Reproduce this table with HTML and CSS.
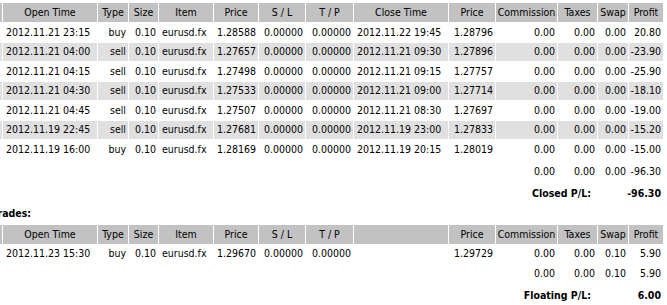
FILE: index.html
```html
<!DOCTYPE html>
<html>
<head>
<meta charset="utf-8">
<link rel="stylesheet" href="styles.css">
</head>
<body>
<div class="page">
<table class="stmt">
  <colgroup>
    <col class="c-ticket"><col class="c-otime"><col class="c-type"><col class="c-size"><col class="c-item"><col class="c-price"><col class="c-sl"><col class="c-tp"><col class="c-ctime"><col class="c-price2"><col class="c-comm"><col class="c-tax"><col class="c-swap"><col class="c-profit">
  </colgroup>
  <tr class="head">
    <td></td><td>Open Time</td><td>Type</td><td>Size</td><td>Item</td><td>Price</td><td>S / L</td><td>T / P</td><td>Close Time</td><td>Price</td><td>Commission</td><td>Taxes</td><td>Swap</td><td>Profit</td>
  </tr>
  <tr class="row">
    <td></td><td class="l">2012.11.21 23:15</td><td class="r">buy</td><td class="r">0.10</td><td class="l">eurusd.fx</td><td class="r">1.28588</td><td class="r">0.00000</td><td class="r">0.00000</td><td class="l">2012.11.22 19:45</td><td class="r">1.28796</td><td class="r">0.00</td><td class="r">0.00</td><td class="r">0.00</td><td class="r">20.80</td>
  </tr>
  <tr class="row alt">
    <td></td><td class="l">2012.11.21 04:00</td><td class="r">sell</td><td class="r">0.10</td><td class="l">eurusd.fx</td><td class="r">1.27657</td><td class="r">0.00000</td><td class="r">0.00000</td><td class="l">2012.11.21 09:30</td><td class="r">1.27896</td><td class="r">0.00</td><td class="r">0.00</td><td class="r">0.00</td><td class="r">-23.90</td>
  </tr>
  <tr class="row">
    <td></td><td class="l">2012.11.21 04:15</td><td class="r">sell</td><td class="r">0.10</td><td class="l">eurusd.fx</td><td class="r">1.27498</td><td class="r">0.00000</td><td class="r">0.00000</td><td class="l">2012.11.21 09:15</td><td class="r">1.27757</td><td class="r">0.00</td><td class="r">0.00</td><td class="r">0.00</td><td class="r">-25.90</td>
  </tr>
  <tr class="row alt">
    <td></td><td class="l">2012.11.21 04:30</td><td class="r">sell</td><td class="r">0.10</td><td class="l">eurusd.fx</td><td class="r">1.27533</td><td class="r">0.00000</td><td class="r">0.00000</td><td class="l">2012.11.21 09:00</td><td class="r">1.27714</td><td class="r">0.00</td><td class="r">0.00</td><td class="r">0.00</td><td class="r">-18.10</td>
  </tr>
  <tr class="row">
    <td></td><td class="l">2012.11.21 04:45</td><td class="r">sell</td><td class="r">0.10</td><td class="l">eurusd.fx</td><td class="r">1.27507</td><td class="r">0.00000</td><td class="r">0.00000</td><td class="l">2012.11.21 08:30</td><td class="r">1.27697</td><td class="r">0.00</td><td class="r">0.00</td><td class="r">0.00</td><td class="r">-19.00</td>
  </tr>
  <tr class="row alt">
    <td></td><td class="l">2012.11.19 22:45</td><td class="r">sell</td><td class="r">0.10</td><td class="l">eurusd.fx</td><td class="r">1.27681</td><td class="r">0.00000</td><td class="r">0.00000</td><td class="l">2012.11.19 23:00</td><td class="r">1.27833</td><td class="r">0.00</td><td class="r">0.00</td><td class="r">0.00</td><td class="r">-15.20</td>
  </tr>
  <tr class="row">
    <td></td><td class="l">2012.11.19 16:00</td><td class="r">buy</td><td class="r">0.10</td><td class="l">eurusd.fx</td><td class="r">1.28169</td><td class="r">0.00000</td><td class="r">0.00000</td><td class="l">2012.11.19 20:15</td><td class="r">1.28019</td><td class="r">0.00</td><td class="r">0.00</td><td class="r">0.00</td><td class="r">-15.00</td>
  </tr>
  <tr class="total t1">
    <td colspan="10"></td><td class="r">0.00</td><td class="r">0.00</td><td class="r">0.00</td><td class="r">-96.30</td>
  </tr>
  <tr class="pl p1">
    <td colspan="10"></td><td colspan="2" class="r b label">Closed P/L:</td><td colspan="2" class="r b">-96.30</td>
  </tr>
  <tr class="section">
    <td colspan="14" class="b title">Open Trades:</td>
  </tr>
  <tr class="head">
    <td></td><td>Open Time</td><td>Type</td><td>Size</td><td>Item</td><td>Price</td><td>S / L</td><td>T / P</td><td></td><td>Price</td><td>Commission</td><td>Taxes</td><td>Swap</td><td>Profit</td>
  </tr>
  <tr class="row">
    <td></td><td class="l">2012.11.23 15:30</td><td class="r">buy</td><td class="r">0.10</td><td class="l">eurusd.fx</td><td class="r">1.29670</td><td class="r">0.00000</td><td class="r">0.00000</td><td></td><td class="r">1.29729</td><td class="r">0.00</td><td class="r">0.00</td><td class="r">0.10</td><td class="r">5.90</td>
  </tr>
  <tr class="total t2">
    <td colspan="10"></td><td class="r">0.00</td><td class="r">0.00</td><td class="r">0.10</td><td class="r">5.90</td>
  </tr>
  <tr class="pl p2">
    <td colspan="10"></td><td colspan="2" class="r b label">Floating P/L:</td><td colspan="2" class="r b">6.00</td>
  </tr>
</table>
</div>
</body>
</html>
```

FILE: styles.css
```css
html, body {
  margin: 0;
  padding: 0;
  background: #ffffff;
}

.page {
  width: 667px;
  height: 305px;
  overflow: hidden;
  padding-top: 2px;
  box-sizing: border-box;
}

.stmt {
  font-family: "DejaVu Sans Condensed", "DejaVu Sans", Tahoma, sans-serif;
  font-stretch: condensed;
  font-size: 10.5px;
  color: #000;
  border-collapse: separate;
  border-spacing: 1px;
  table-layout: fixed;
  width: 707px;
  margin-left: -43px;
}

.c-ticket { width: 44px; }
.c-otime { width: 94px; }
.c-type { width: 30px; }
.c-size { width: 29px; }
.c-item { width: 54px; }
.c-price { width: 44px; }
.c-sl { width: 46px; }
.c-tp { width: 47px; }
.c-ctime { width: 94px; }
.c-price2 { width: 46px; }
.c-comm { width: 61px; }
.c-tax { width: 39px; }
.c-swap { width: 30px; }
.c-profit { width: 34px; }

.stmt td {
  padding: 0;
  white-space: nowrap;
  overflow: hidden;
  vertical-align: middle;
  line-height: 13px;
}

.head td {
  background: #c2c2c2;
  text-align: center;
  height: 19px;
}

.row td {
  height: 18.5px;
}

.row.alt td {
  background: #e0e0e0;
}

.stmt td.l {
  text-align: left;
  padding-left: 3px;
}

.stmt td.r {
  text-align: right;
  padding-right: 2px;
}

.b { font-weight: bold; }

.stmt td.label {
  padding-right: 6px;
}

.t1 td { height: 24px; }
.p1 td { height: 17px; }
.section td { height: 21px; }
.t2 td { height: 19px; }
.p2 td { height: 23px; }

.stmt td.title {
  text-align: left;
  padding-left: 3px;
}
```
